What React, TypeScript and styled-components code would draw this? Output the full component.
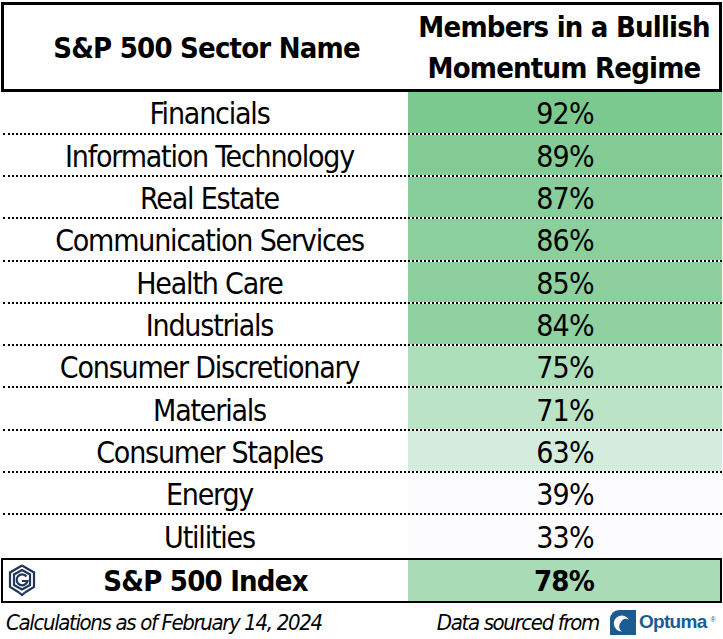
import React from 'react';
import styled, { createGlobalStyle } from 'styled-components';

const GlobalStyle = createGlobalStyle`
  body {
    margin: 0;
    background: #ffffff;
    font-family: "DejaVu Sans", "Liberation Sans", sans-serif;
    font-stretch: condensed;
    color: #000;
  }
`;

const Page = styled.div`
  width: 723px;
  height: 639px;
  padding: 2px 1px 0 1px;
  box-sizing: border-box;
  display: flex;
  flex-direction: column;
`;

const HeaderBox = styled.div`
  display: grid;
  grid-template-columns: 405px 1fr;
  border: 3px solid #000;
  height: 91px;
  box-sizing: border-box;
`;

const HeaderCell = styled.div`
  display: flex;
  flex-direction: column;
  align-items: center;
  justify-content: center;
  font-size: 29px;
  font-weight: 600;
  line-height: 41px;
  letter-spacing: -0.8px;
  padding-top: 2px;
`;

const Rows = styled.div`
  display: flex;
  flex-direction: column;
`;

const Row = styled.div`
  display: grid;
  grid-template-columns: 405px 1fr;
  height: 42.3px;
  border-bottom: 2px dotted #000;
  box-sizing: border-box;
  margin-left: 2px;
  &:last-child {
    border-bottom: none;
  }
`;

const NameCell = styled.div`
  display: flex;
  align-items: center;
  justify-content: center;
  font-size: 30px;
  letter-spacing: -1.2px;
  padding: 3px 0 0 8px;
`;

const ValueCell = styled.div<{ $bg: string }>`
  display: flex;
  align-items: center;
  justify-content: center;
  background: ${(p) => p.$bg};
  font-size: 30px;
  letter-spacing: -0.9px;
  padding-top: 3px;
`;

const IndexBox = styled.div`
  display: grid;
  grid-template-columns: 405px 1fr;
  border: 2.5px solid #000;
  height: 46px;
  box-sizing: border-box;
`;

const IndexName = styled.div`
  position: relative;
  display: flex;
  align-items: center;
  justify-content: center;
  font-size: 29px;
  font-weight: 600;
  letter-spacing: -0.8px;
  padding-top: 2px;
`;

const LogoMark = styled.div`
  position: absolute;
  left: 5px;
  top: 4px;
  width: 28px;
  height: 33px;
`;

const IndexValue = styled.div`
  display: flex;
  align-items: center;
  justify-content: center;
  background: #a9dbb7;
  font-size: 29px;
  font-weight: 600;
  letter-spacing: -0.8px;
  padding-top: 2px;
`;

const Footer = styled.div`
  display: flex;
  justify-content: space-between;
  align-items: center;
  padding: 2px 7px 0 5px;
  height: 34px;
  font-style: italic;
  font-size: 22px;
  letter-spacing: -1.35px;
`;

const Source = styled.div`
  display: flex;
  align-items: center;
  gap: 11px;
`;

const Optuma = styled.div`
  display: flex;
  align-items: center;
  gap: 3px;
  font-style: normal;
  font-family: "Liberation Sans", Arial, sans-serif;
  font-stretch: normal;
  font-weight: 700;
  font-size: 19px;
  color: #1b5b94;
  letter-spacing: -0.7px;
  sup {
    font-size: 7px;
    font-weight: 400;
    margin-left: 1px;
    align-self: flex-start;
    margin-top: 6px;
  }
`;

const sectors: [string, string, string][] = [
  ['Financials', '92%', '#7bc98f'],
  ['Information Technology', '89%', '#83cc96'],
  ['Real Estate', '87%', '#88ce9a'],
  ['Communication Services', '86%', '#8acf9c'],
  ['Health Care', '85%', '#8dd09e'],
  ['Industrials', '84%', '#8fd1a0'],
  ['Consumer Discretionary', '75%', '#acdeba'],
  ['Materials', '71%', '#bbe3c6'],
  ['Consumer Staples', '63%', '#d4ecdd'],
  ['Energy', '39%', '#fcfcff'],
  ['Utilities', '33%', '#fcfcff'],
];

function GLogo() {
  return (
    <svg width="28" height="33" viewBox="0 0 28 33" fill="none" stroke="#22365a" strokeWidth="2.2">
      <path d="M14 1.5 L26 8.5 L26 23 L17 28.5 M11 28.5 L2 23 L2 8.5 L14 1.5" />
      <path d="M14 6 L22 10.5 L22 21 L14 25.5 L6 21 L6 10.5 Z" />
      <path d="M18.5 12.5 A5.5 5.5 0 1 0 19.5 17 L14 17" />
      <path d="M11 28.5 L14 31 L17 28.5" />
    </svg>
  );
}

function OptumaIcon() {
  return (
    <svg width="26" height="25" viewBox="0 0 26 25">
      <path d="M9 0 H26 V25 H0 V9 A9 9 0 0 1 9 0 Z" fill="#1b5b94" />
      <path
        d="M19 10 A8 8 0 1 0 12 21.5 A6 6 0 0 1 11 12 A5 5 0 0 1 19 10 Z"
        fill="#fff"
      />
    </svg>
  );
}

export default function App() {
  return (
    <>
      <GlobalStyle />
      <Page>
        <HeaderBox>
          <HeaderCell>S&amp;P 500 Sector Name</HeaderCell>
          <HeaderCell>
            <span>Members in a Bullish</span>
            <span>Momentum Regime</span>
          </HeaderCell>
        </HeaderBox>
        <Rows>
          {sectors.map(([name, value, bg]) => (
            <Row key={name}>
              <NameCell>{name}</NameCell>
              <ValueCell $bg={bg}>{value}</ValueCell>
            </Row>
          ))}
        </Rows>
        <IndexBox>
          <IndexName>
            <LogoMark>
              <GLogo />
            </LogoMark>
            S&amp;P 500 Index
          </IndexName>
          <IndexValue>78%</IndexValue>
        </IndexBox>
        <Footer>
          <span>Calculations as of February 14, 2024</span>
          <Source>
            <span>Data sourced from</span>
            <Optuma>
              <OptumaIcon />
              Optuma<sup>®</sup>
            </Optuma>
          </Source>
        </Footer>
      </Page>
    </>
  );
}
